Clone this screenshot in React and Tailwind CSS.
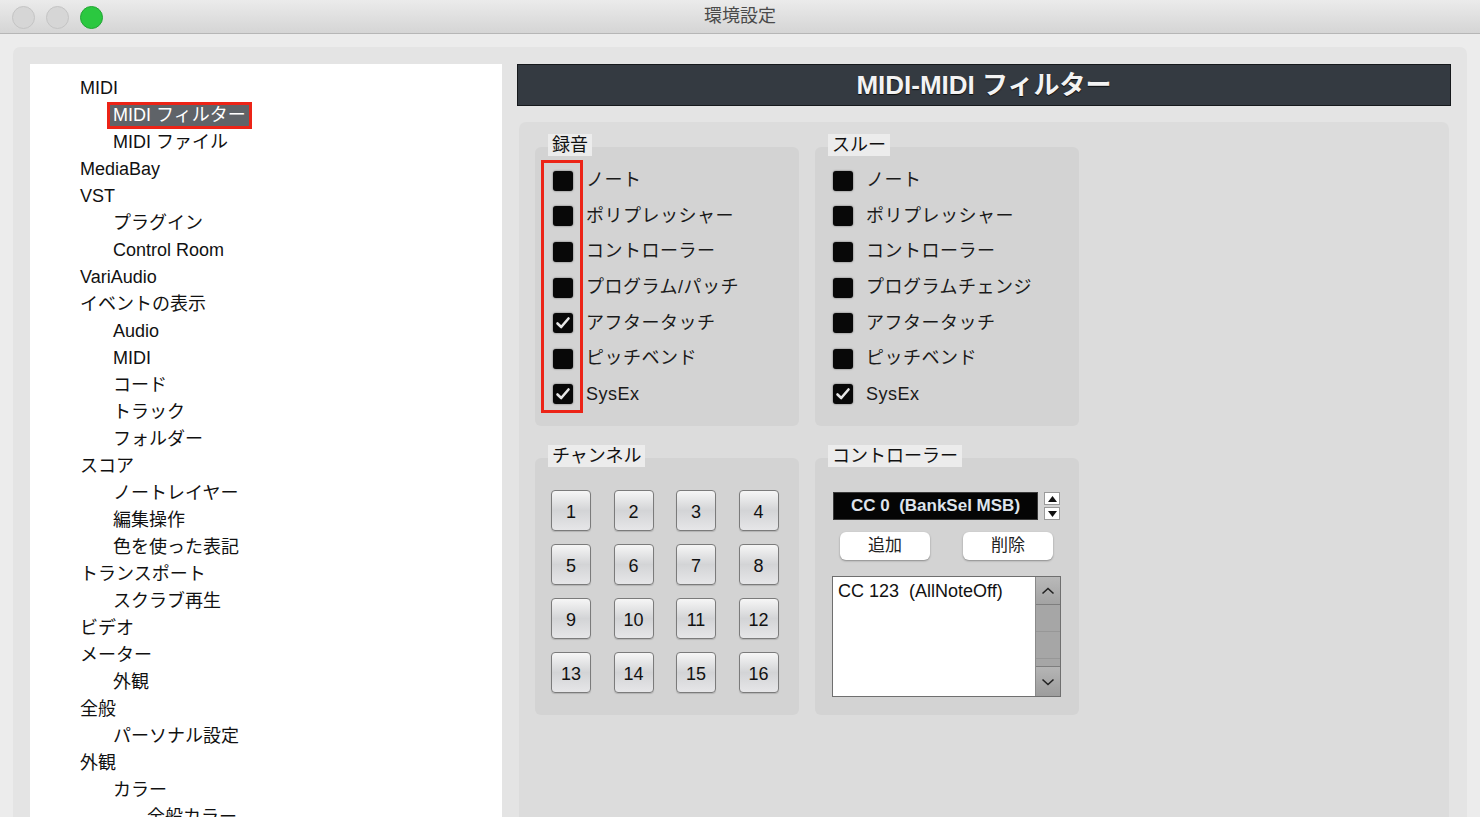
const font = { fontFamily: '"Liberation Sans", "Noto Sans CJK JP", sans-serif' }

const tree = [
  [0, 'MIDI'],
  [1, 'MIDI フィルター', true],
  [1, 'MIDI ファイル'],
  [0, 'MediaBay'],
  [0, 'VST'],
  [1, 'プラグイン'],
  [1, 'Control Room'],
  [0, 'VariAudio'],
  [0, 'イベントの表示'],
  [1, 'Audio'],
  [1, 'MIDI'],
  [1, 'コード'],
  [1, 'トラック'],
  [1, 'フォルダー'],
  [0, 'スコア'],
  [1, 'ノートレイヤー'],
  [1, '編集操作'],
  [1, '色を使った表記'],
  [0, 'トランスポート'],
  [1, 'スクラブ再生'],
  [0, 'ビデオ'],
  [0, 'メーター'],
  [1, '外観'],
  [0, '全般'],
  [1, 'パーソナル設定'],
  [0, '外観'],
  [1, 'カラー'],
  [2, '全般カラー'],
]

const indent = ['pl-[50px]', 'pl-[83px]', 'pl-[117px]']

const recordItems = [
  ['ノート', false],
  ['ポリプレッシャー', false],
  ['コントローラー', false],
  ['プログラム/パッチ', false],
  ['アフタータッチ', true],
  ['ピッチベンド', false],
  ['SysEx', true],
]

const thruItems = [
  ['ノート', false],
  ['ポリプレッシャー', false],
  ['コントローラー', false],
  ['プログラムチェンジ', false],
  ['アフタータッチ', false],
  ['ピッチベンド', false],
  ['SysEx', true],
]

function TrafficLight({ active }) {
  return (
    <div
      className={
        active
          ? 'w-[23px] h-[23px] rounded-full bg-[#2bc840] border border-[#22a534]'
          : 'w-[23px] h-[23px] rounded-full bg-[#d6d6d6] border border-[#c4c4c4]'
      }
    />
  )
}

function Check({ checked }) {
  return (
    <div className="w-[20px] h-[20px] rounded-[3px] bg-[#080808] shadow-[0_0_2px_rgba(0,0,0,0.6)] flex items-center justify-center">
      {checked && (
        <svg width="16" height="16" viewBox="0 0 16 16">
          <path d="M2.5 8.5 L6.2 12 L13.5 3.5" fill="none" stroke="#e6e6e6" strokeWidth="2.6" strokeLinecap="round" strokeLinejoin="round" />
        </svg>
      )}
    </div>
  )
}

function Group({ label, children, className }) {
  return (
    <div className={`relative w-[264px] rounded-[6px] bg-[#d3d3d3] ${className}`}>
      <div className="absolute left-[13px] top-[-13px] h-[22px] px-[4px] bg-[#ececec] text-[18px] leading-[22px] text-[#111]">
        {label}
      </div>
      {children}
    </div>
  )
}

function CheckList({ items, marked }) {
  return (
    <div className="relative h-[279px] pt-[16px] pl-[18px]">
      {marked && (
        <div className="absolute left-[6px] top-[13px] w-[42px] h-[253px] border-[3px] border-[#ec2417]" />
      )}
      <div className="flex flex-col">
        {items.map(([text, on]) => (
          <div key={text} className="h-[35.6px] flex items-center gap-[13px]">
            <Check checked={on} />
            <span className="text-[18px] text-[#1a1a1a] tracking-[0.5px]">{text}</span>
          </div>
        ))}
      </div>
    </div>
  )
}

function ChannelButton({ n }) {
  return (
    <div className="w-[40px] h-[41px] rounded-[4px] border-[1.5px] border-[#7b7b7b] bg-gradient-to-b from-[#f6f6f6] via-[#d3d4d6] to-[#e6e6e8] flex items-center justify-center pt-[3px] text-[18px] text-[#111] shadow-[0_1px_1px_rgba(0,0,0,0.15)]">
      {n}
    </div>
  )
}

function PushButton({ children }) {
  return (
    <div className="w-[90px] h-[28px] rounded-[6px] bg-white shadow-[0_1px_2px_rgba(0,0,0,0.35)] flex items-center justify-center text-[17px] text-[#222]">
      {children}
    </div>
  )
}

export default function App() {
  return (
    <div className="w-[1480px] h-[817px] overflow-hidden bg-[#ececec] flex flex-col" style={font}>
      {/* title bar */}
      <div className="relative h-[34px] shrink-0 bg-gradient-to-b from-[#ebebeb] to-[#d5d5d5] border-b border-[#b6b6b6] flex items-center">
        <div className="flex items-center gap-[11px] pl-[12px] pt-[1px]">
          <TrafficLight />
          <TrafficLight />
          <TrafficLight active />
        </div>
        <div className="absolute inset-x-0 top-0 h-[33px] flex items-center justify-center text-[18px] text-[#4a4a4a] pointer-events-none">
          環境設定
        </div>
      </div>

      <div className="flex-1 pt-[13px] pl-[13px] pr-[13px] min-h-0">
        <div className="h-full rounded-t-[7px] bg-[#e4e4e4] pt-[17px] pl-[17px] pr-[16px] flex gap-[15px]">
          {/* category tree */}
          <div className="w-[472px] bg-white pt-[11px] overflow-hidden">
            {tree.map(([level, text, selected], i) => (
              <div key={i} className={`h-[27px] flex items-center text-[18px] text-[#111] ${indent[level]}`}>
                {selected ? (
                  <span className="ml-[-3px] outline-[3px] outline-solid outline-[#ec2417] bg-[#5f6368] text-white px-[3px] leading-[21px]">
                    {text}
                  </span>
                ) : (
                  <span>{text}</span>
                )}
              </div>
            ))}
          </div>

          {/* settings page */}
          <div className="flex-1 flex flex-col">
            <div className="h-[42px] shrink-0 bg-[#343a41] border border-[#16191c] flex items-center justify-center text-[26px] font-bold text-[#f3f3f3] [text-shadow:0_1px_1px_rgba(0,0,0,0.8)]">
              MIDI-MIDI フィルター
            </div>
            <div className="flex-1 mt-[16px] mx-[2px] rounded-t-[7px] bg-[#dcdcdc] pt-[25px] pl-[16px]">
              <div className="flex gap-[16px]">
                <Group label="録音">
                  <CheckList items={recordItems} marked />
                </Group>
                <Group label="スルー">
                  <CheckList items={thruItems} />
                </Group>
              </div>

              <div className="flex gap-[16px] mt-[32px]">
                <Group label="チャンネル" className="h-[257px]">
                  <div className="grid grid-cols-[repeat(4,40px)] gap-x-[22.5px] gap-y-[13px] pt-[32px] pl-[16px]">
                    {Array.from({ length: 16 }, (_, i) => (
                      <ChannelButton key={i} n={i + 1} />
                    ))}
                  </div>
                </Group>
                <Group label="コントローラー" className="h-[257px]">
                  <div className="pt-[34px] pl-[18px]">
                    <div className="flex items-center gap-[6px]">
                      <div className="w-[205px] h-[28px] bg-[#050505] border border-[#3a3a3a] flex items-center justify-center text-[17px] font-bold text-[#dfe4ec]">
                        CC 0&nbsp;&nbsp;(BankSel MSB)
                      </div>
                      <div className="flex flex-col gap-[2px]">
                        <div className="w-[16px] h-[13px] bg-white border border-[#9a9a9a] flex items-center justify-center">
                          <svg width="9" height="6" viewBox="0 0 9 6"><path d="M4.5 0 L9 6 L0 6 Z" fill="#111" /></svg>
                        </div>
                        <div className="w-[16px] h-[13px] bg-white border border-[#9a9a9a] flex items-center justify-center">
                          <svg width="9" height="6" viewBox="0 0 9 6"><path d="M0 0 L9 0 L4.5 6 Z" fill="#111" /></svg>
                        </div>
                      </div>
                    </div>
                    <div className="flex gap-[33px] mt-[12px] pl-[7px]">
                      <PushButton>追加</PushButton>
                      <PushButton>削除</PushButton>
                    </div>
                    <div className="mt-[16px] ml-[-1px] w-[229px] h-[121px] border border-[#6f6f6f] bg-white flex">
                      <div className="flex-1 pl-[5px] pt-[1px] text-[18px] text-[#111]">CC 123&nbsp;&nbsp;(AllNoteOff)</div>
                      <div className="w-[25px] bg-[#a6a6a6] border-l border-[#8a8a8a] flex flex-col">
                        <div className="h-[28px] bg-gradient-to-b from-[#b9b9b9] to-[#a3a3a3] border-b border-[#7e7e7e] flex items-center justify-center">
                          <svg width="14" height="8" viewBox="0 0 14 8"><path d="M1.5 6.5 L7 1.5 L12.5 6.5" fill="none" stroke="#222" strokeWidth="1.6" /></svg>
                        </div>
                        <div className="flex-1 flex flex-col">
                          <div className="h-[27px] border-b border-[#979797]" />
                          <div className="h-[27px] border-b border-[#979797]" />
                        </div>
                        <div className="h-[30px] bg-gradient-to-b from-[#b5b5b5] to-[#9c9c9c] border-t border-[#7e7e7e] flex items-center justify-center">
                          <svg width="14" height="8" viewBox="0 0 14 8"><path d="M1.5 1.5 L7 6.5 L12.5 1.5" fill="none" stroke="#222" strokeWidth="1.6" /></svg>
                        </div>
                      </div>
                    </div>
                  </div>
                </Group>
              </div>
            </div>
          </div>
        </div>
      </div>
    </div>
  )
}
